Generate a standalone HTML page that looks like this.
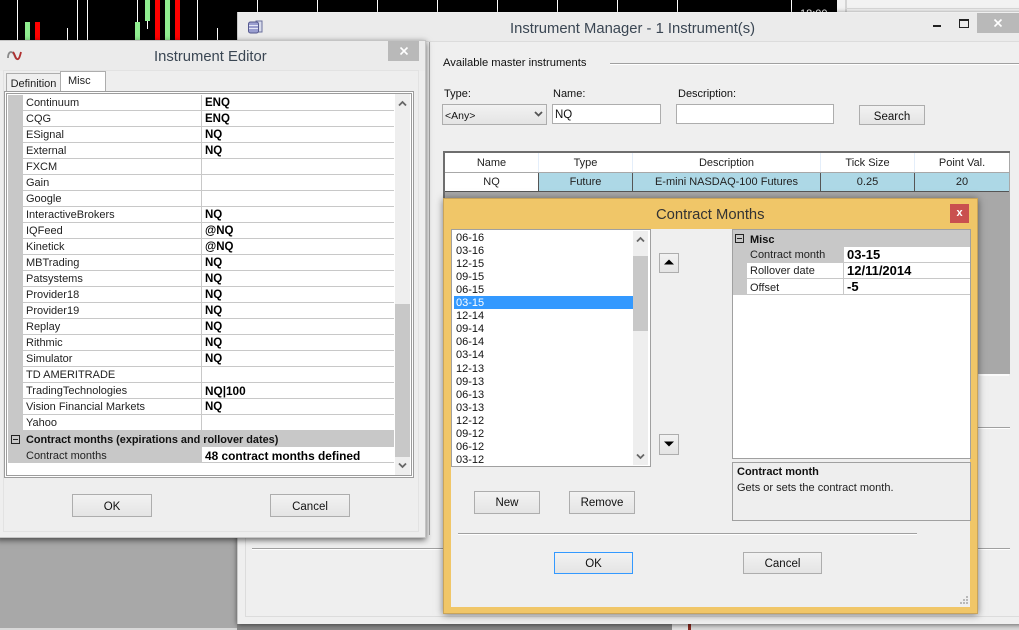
<!DOCTYPE html>
<html><head><meta charset="utf-8">
<style>
html,body{margin:0;padding:0;background:#a8a8a8}
#p{position:relative;width:1019px;height:630px;overflow:hidden;background:#a8a8a8;font-family:"Liberation Sans",sans-serif;font-size:11px;color:#111}
#p div{position:absolute;box-sizing:border-box}
.t{white-space:nowrap;line-height:14px;height:14px;padding-top:1px}
.b{font-weight:bold;font-size:11.9px;color:#000}
.pv{font-weight:bold;font-size:13px;color:#000}
.btn{background:linear-gradient(#f2f2f2,#e4e4e4);border:1px solid #adadad;text-align:center;font-size:11.5px;color:#111;padding-top:2px}
.r{left:23px;width:371px;height:16px;background:#fff;border-bottom:1px solid #c8c8c8}
.r i{position:absolute;left:178px;top:0;width:1px;height:16px;background:#c8c8c8}
.r span{position:absolute;top:1px;left:3px;line-height:15px;white-space:nowrap;color:#222}
.r b{position:absolute;top:1px;left:182px;line-height:15px;font-size:11.5px;color:#000;white-space:nowrap}
.li{left:2px;width:179px;height:13px;line-height:15px;padding-left:2px;color:#111;font-size:11px}
.h{top:153px;height:19px;line-height:21px;text-align:center;background:#fff;border-right:1px solid #e4eefa;color:#222}
.c{top:173px;height:18px;line-height:19px;text-align:center;background:#add8e6;border-right:1px solid #555;color:#222}
.in{background:#fff;border:1px solid #adadad}
.sep{height:2px;background:linear-gradient(#a0a0a0 50%,#fff 50%)}
</style></head><body>
<div id="p">
<!-- chart behind -->
<div style="left:0;top:0;width:837px;height:40px;background:#000"></div>
<div style="left:800px;top:9px;width:30px;height:4px;overflow:hidden;color:#fff;font-size:11px;line-height:11px">18:00</div>
<div style="left:837px;top:0;width:182px;height:13px;background:#f2f2f2"></div>
<div style="left:845px;top:0;width:2px;height:13px;background:#d4d4d4"></div>
<div style="left:845px;top:8px;width:174px;height:1px;background:#d8d8d8"></div>
<div style="left:17px;top:0;width:1px;height:40px;background:#fff"></div>
<div style="left:67px;top:28px;width:1px;height:12px;background:#fff"></div>
<div style="left:77px;top:0;width:1px;height:40px;background:#fff"></div>
<div style="left:87px;top:0;width:1px;height:40px;background:#fff"></div>
<div style="left:137px;top:0;width:1px;height:22px;background:#fff"></div>
<div style="left:147px;top:20px;width:1px;height:9px;background:#fff"></div>
<div style="left:197px;top:0;width:1px;height:40px;background:#fff"></div>
<div style="left:217px;top:28px;width:1px;height:12px;background:#fff"></div>
<div style="left:257px;top:0;width:1px;height:13px;background:#fff"></div>
<div style="left:317px;top:0;width:1px;height:13px;background:#fff"></div>
<div style="left:377px;top:0;width:1px;height:13px;background:#fff"></div>
<div style="left:437px;top:0;width:1px;height:13px;background:#fff"></div>
<div style="left:497px;top:0;width:1px;height:13px;background:#fff"></div>
<div style="left:557px;top:0;width:1px;height:13px;background:#fff"></div>
<div style="left:617px;top:0;width:1px;height:13px;background:#fff"></div>
<div style="left:677px;top:0;width:1px;height:13px;background:#fff"></div>
<div style="left:791px;top:0;width:1px;height:13px;background:#fff"></div>
<div style="left:25px;top:22px;width:5px;height:18px;background:#90ee90"></div>
<div style="left:35px;top:22px;width:5px;height:18px;background:#f00"></div>
<div style="left:135px;top:22px;width:5px;height:18px;background:#90ee90"></div>
<div style="left:145px;top:0;width:5px;height:21px;background:#90ee90"></div>
<div style="left:155px;top:0;width:5px;height:40px;background:#f00"></div>
<div style="left:165px;top:0;width:5px;height:40px;background:#90ee90"></div>
<div style="left:175px;top:0;width:5px;height:40px;background:#f00"></div>
<!-- bottom strip -->
<div style="left:0;top:628px;width:1019px;height:2px;background:#d8d8d8"></div>
<div style="left:237px;top:624px;width:782px;height:6px;background:#dcdcdc"></div>
<div style="left:237px;top:624px;width:435px;height:6px;background:#8a8a8a"></div>
<div style="left:672px;top:624px;width:16px;height:6px;background:#e6e6e6"></div>
<div style="left:688px;top:624px;width:3px;height:6px;background:#8a2a20"></div>

<!-- Manager window -->
<div style="left:237px;top:12px;width:790px;height:612px;background:#efefef;box-shadow:0 1px 5px rgba(0,0,0,.55);border-left:1px solid #c8c8c8"></div>
<div style="left:238px;top:13px;width:781px;height:29px;background:#ebebeb;border-bottom:1px solid #dcdcdc"></div>
<div style="left:245px;top:42px;width:790px;height:575px;border-left:1px solid #dcdcdc;border-bottom:1px solid #dcdcdc"></div>
<svg style="position:absolute;left:247px;top:19px" width="16" height="16" viewBox="0 0 16 16"><rect x="9" y="2" width="6" height="11" fill="#d9dcec" stroke="#6a6f9c"/><rect x="1.500" y="3" width="10" height="11" rx="2" fill="#9a9ed0" stroke="#55598f"/><path d="M2 6.500h9M2 9.500h9" stroke="#e4e6f6"/></svg>
<div class="t" id="mt" style="left:510px;top:19px;height:19px;line-height:18px;font-size:14.8px;color:#3a4653">Instrument Manager - 1 Instrument(s)</div>
<div style="left:933px;top:25px;width:8px;height:2px;background:#222"></div>
<div style="left:959px;top:19px;width:10px;height:9px;border:1px solid #222;border-top-width:2px"></div>
<div style="left:977px;top:13px;width:42px;height:20px;background:#b9b9b9"></div>
<svg style="position:absolute;left:993px;top:18px" width="10" height="10"><path d="M1.500 1.500l7 7M8.500 1.500l-7 7" stroke="#fff" stroke-width="1.600"/></svg>
<div class="t" style="left:443px;top:55px;font-size:11.200px">Available master instruments</div>
<div class="sep" style="left:610px;top:63px;width:409px"></div>
<div class="t" style="left:444px;top:86px">Type:</div>
<div class="t" style="left:553px;top:86px">Name:</div>
<div class="t" style="left:678px;top:86px">Description:</div>
<div class="btn" style="left:442px;top:104px;width:105px;height:21px;text-align:left;padding-left:2px;line-height:20px;font-size:10.500px;padding-top:1px">&lt;Any&gt;</div>
<svg style="position:absolute;left:534px;top:111px" width="9" height="7"><path d="M1 1l3.500 3.500L8 1" fill="none" stroke="#555" stroke-width="1.800"/></svg>
<div class="in t" style="left:552px;top:104px;width:109px;height:20px;line-height:18px;padding-left:2px;font-size:11.500px">NQ</div>
<div class="in" style="left:676px;top:104px;width:158px;height:20px"></div>
<div class="btn" style="left:859px;top:105px;width:66px;height:20px;line-height:18px">Search</div>
<!-- table -->
<div style="left:443px;top:151px;width:567px;height:223px;background:#a8a8a8;border:2px solid #6e6e6e;border-bottom:0;border-right:0"></div>
<div class="h" style="left:445px;width:94px">Name</div>
<div class="h" style="left:539px;width:94px">Type</div>
<div class="h" style="left:633px;width:188px">Description</div>
<div class="h" style="left:821px;width:94px">Tick Size</div>
<div class="h" style="left:915px;width:94px;border:0">Point Val.</div>
<div class="c" style="left:445px;width:94px;background:#fff">NQ</div>
<div class="c" style="left:539px;width:94px">Future</div>
<div class="c" style="left:633px;width:188px">E-mini NASDAQ-100 Futures</div>
<div class="c" style="left:821px;width:94px">0.25</div>
<div class="c" style="left:915px;width:94px;border:0">20</div>
<div style="left:445px;top:191px;width:564px;height:1px;background:#555"></div>
<div style="left:979px;top:374px;width:30px;height:2px;background:#fafafa"></div>
<div class="sep" style="left:978px;top:427px;width:32px"></div>
<div class="sep" style="left:978px;top:548px;width:32px"></div>
<div class="sep" style="left:252px;top:548px;width:191px"></div>
<div style="left:429px;top:42px;width:1px;height:493px;background:#a8a8a8"></div>

<!-- Instrument Editor -->
<div style="left:-4px;top:40px;width:430px;height:498px;background:#eeeeee;border:1px solid #c4c4c4;box-shadow:0 2px 6px rgba(0,0,0,.6)"></div>
<div style="left:0;top:41px;width:425px;height:30px;background:#ebebeb"></div>
<svg style="position:absolute;left:6px;top:48px" width="17" height="14" viewBox="0 0 17 14"><path d="M2 10C2 4 5 3 7 5s2 6 4 6" fill="none" stroke="#8a8a8a" stroke-width="1.800"/><path d="M7 4c2 2 2 6 4 7s3-3 4-7" fill="none" stroke="#b03030" stroke-width="1.800"/></svg>
<div class="t" id="et" style="left:154px;top:47px;height:19px;line-height:18px;font-size:14.8px;color:#3a4653">Instrument Editor</div>
<div style="left:388px;top:41px;width:31px;height:20px;background:#b9b9b9"></div>
<svg style="position:absolute;left:399px;top:46px" width="10" height="10"><path d="M1.500 1.500l7 7M8.500 1.500l-7 7" stroke="#fff" stroke-width="1.600"/></svg>
<div style="left:3px;top:70px;width:416px;height:462px;border:1px solid #e2e2e2"></div>
<div style="left:6px;top:73px;width:55px;height:19px;background:#efefef;border:1px solid #adadad;line-height:20px;text-align:center;color:#222">Definition</div>
<div style="left:60px;top:71px;width:46px;height:21px;background:#fff;border:1px solid #adadad;border-bottom:0;line-height:19px;padding-left:7px;color:#222">Misc</div>
<div style="left:4px;top:91px;width:410px;height:387px;background:#fff;border:1px solid #9c9c9c"></div>
<div style="left:6px;top:93px;width:406px;height:383px;background:#fff;border:1px solid #9c9c9c"></div>
<div style="left:8px;top:95px;width:15px;height:336px;background:#c8c8c8"></div>
<div class="r" style="top:95px"><span>Continuum</span><i></i><b>ENQ</b></div>
<div class="r" style="top:111px"><span>CQG</span><i></i><b>ENQ</b></div>
<div class="r" style="top:127px"><span>ESignal</span><i></i><b>NQ</b></div>
<div class="r" style="top:143px"><span>External</span><i></i><b>NQ</b></div>
<div class="r" style="top:159px"><span>FXCM</span><i></i></div>
<div class="r" style="top:175px"><span>Gain</span><i></i></div>
<div class="r" style="top:191px"><span>Google</span><i></i></div>
<div class="r" style="top:207px"><span>InteractiveBrokers</span><i></i><b>NQ</b></div>
<div class="r" style="top:223px"><span>IQFeed</span><i></i><b>@NQ</b></div>
<div class="r" style="top:239px"><span>Kinetick</span><i></i><b>@NQ</b></div>
<div class="r" style="top:255px"><span>MBTrading</span><i></i><b>NQ</b></div>
<div class="r" style="top:271px"><span>Patsystems</span><i></i><b>NQ</b></div>
<div class="r" style="top:287px"><span>Provider18</span><i></i><b>NQ</b></div>
<div class="r" style="top:303px"><span>Provider19</span><i></i><b>NQ</b></div>
<div class="r" style="top:319px"><span>Replay</span><i></i><b>NQ</b></div>
<div class="r" style="top:335px"><span>Rithmic</span><i></i><b>NQ</b></div>
<div class="r" style="top:351px"><span>Simulator</span><i></i><b>NQ</b></div>
<div class="r" style="top:367px"><span>TD AMERITRADE</span><i></i></div>
<div class="r" style="top:383px"><span>TradingTechnologies</span><i></i><b style="font-size:11.800px">NQ|100</b></div>
<div class="r" style="top:399px"><span>Vision Financial Markets</span><i></i><b>NQ</b></div>
<div class="r" style="top:415px"><span>Yahoo</span><i></i></div>
<div style="left:8px;top:431px;width:386px;height:16px;background:#c8c8c8"></div>
<div style="left:11px;top:435px;width:9px;height:9px;border:1px solid #222"></div>
<div style="left:13px;top:439px;width:5px;height:1px;background:#222"></div>
<div class="t" style="left:26px;top:432px;height:15px;font-weight:bold;font-size:10.900px;color:#111">Contract months (expirations and rollover dates)</div>
<div style="left:8px;top:447px;width:194px;height:16px;background:#c8c8c8"></div>
<div class="t" style="left:26px;top:448px;height:15px;color:#222">Contract months</div>
<div class="t b" style="left:205px;top:448px;height:15px">48 contract months defined</div>
<div style="left:202px;top:462px;width:192px;height:1px;background:#c8c8c8"></div>
<div style="left:395px;top:94px;width:15px;height:381px;background:#eee"></div>
<div style="left:395px;top:304px;width:15px;height:153px;background:#c8c8c8"></div>
<svg style="position:absolute;left:398px;top:100px" width="9" height="7"><path d="M1 5.500l3.500-3.500L8 5.500" fill="none" stroke="#666" stroke-width="1.800"/></svg>
<svg style="position:absolute;left:398px;top:462px" width="9" height="7"><path d="M1 1.500l3.500 3.500L8 1.500" fill="none" stroke="#666" stroke-width="1.800"/></svg>
<div class="btn" style="left:72px;top:494px;width:80px;height:23px;line-height:20px">OK</div>
<div class="btn" style="left:270px;top:494px;width:80px;height:23px;line-height:20px">Cancel</div>

<!-- Contract Months -->
<div style="left:443px;top:198px;width:535px;height:416px;background:#f0c668;border:1px solid #c9a45a;box-shadow:0 1px 7px rgba(0,0,0,.5)"></div>
<div class="t" id="ct" style="left:656px;top:205px;height:19px;line-height:18px;font-size:14.8px;color:#333">Contract Months</div>
<div style="left:950px;top:204px;width:19px;height:19px;background:#c9504f;color:#fff;text-align:center;font-weight:bold;font-size:11px;line-height:18px">x</div>
<div style="left:451px;top:229px;width:519px;height:378px;background:#efefef"></div>
<!-- listbox -->
<div style="left:451px;top:229px;width:200px;height:238px;background:#fff;border:1px solid #a0a0a0">
<div class="li" style="top:1px">06-16</div>
<div class="li" style="top:14px">03-16</div>
<div class="li" style="top:27px">12-15</div>
<div class="li" style="top:40px">09-15</div>
<div class="li" style="top:53px">06-15</div>
<div class="li" style="top:66px;background:#3399ff;color:#fff">03-15</div>
<div class="li" style="top:79px">12-14</div>
<div class="li" style="top:92px">09-14</div>
<div class="li" style="top:105px">06-14</div>
<div class="li" style="top:118px">03-14</div>
<div class="li" style="top:132px">12-13</div>
<div class="li" style="top:145px">09-13</div>
<div class="li" style="top:158px">06-13</div>
<div class="li" style="top:171px">03-13</div>
<div class="li" style="top:184px">12-12</div>
<div class="li" style="top:197px">09-12</div>
<div class="li" style="top:210px">06-12</div>
<div class="li" style="top:222px;height:14px;line-height:17px">03-12</div>
</div>
<div style="left:633px;top:231px;width:15px;height:234px;background:#eee"></div>
<div style="left:633px;top:256px;width:15px;height:75px;background:#c8c8c8"></div>
<svg style="position:absolute;left:636px;top:236px" width="9" height="7"><path d="M1 5.500l3.500-3.500L8 5.500" fill="none" stroke="#666" stroke-width="1.800"/></svg>
<svg style="position:absolute;left:636px;top:453px" width="9" height="7"><path d="M1 1.500l3.500 3.500L8 1.500" fill="none" stroke="#666" stroke-width="1.800"/></svg>
<div class="btn" style="left:659px;top:253px;width:20px;height:20px;padding:0"></div>
<svg style="position:absolute;left:664px;top:259px" width="10" height="6"><path d="M0 5.500L5 .5l5 5z" fill="#000"/></svg>
<div class="btn" style="left:659px;top:434px;width:20px;height:21px;padding:0"></div>
<svg style="position:absolute;left:664px;top:441px" width="10" height="6"><path d="M0 .5L5 5.500 10 .5z" fill="#000"/></svg>
<!-- property grid -->
<div style="left:732px;top:229px;width:239px;height:230px;background:#fff;border:1px solid #a0a0a0"></div>
<div style="left:733px;top:230px;width:237px;height:17px;background:#c8c8c8"></div>
<div style="left:735px;top:234px;width:9px;height:9px;border:1px solid #222"></div>
<div style="left:737px;top:238px;width:5px;height:1px;background:#222"></div>
<div class="t" style="left:750px;top:232px;height:15px;font-weight:bold;color:#111">Misc</div>
<div style="left:733px;top:247px;width:111px;height:16px;background:#c8c8c8"></div>
<div style="left:733px;top:263px;width:14px;height:32px;background:#c8c8c8"></div>
<div style="left:747px;top:262px;width:223px;height:1px;background:#c8c8c8"></div>
<div style="left:747px;top:278px;width:223px;height:1px;background:#c8c8c8"></div>
<div style="left:733px;top:294px;width:237px;height:1px;background:#c8c8c8"></div>
<div style="left:843px;top:263px;width:1px;height:32px;background:#c8c8c8"></div>
<div class="t" style="left:750px;top:247px;height:15px;color:#222">Contract month</div>
<div class="t" style="left:750px;top:263px;height:15px;color:#222">Rollover date</div>
<div class="t" style="left:750px;top:280px;height:14px;color:#222">Offset</div>
<div class="t pv" style="left:847px;top:247px;height:15px">03-15</div>
<div class="t pv" style="left:847px;top:263px;height:15px">12/11/2014</div>
<div class="t pv" style="left:847px;top:279px;height:15px">-5</div>
<!-- help -->
<div style="left:732px;top:462px;width:239px;height:59px;background:#eee;border:1px solid #a0a0a0"></div>
<div class="t" style="left:737px;top:464px;height:15px;font-weight:bold;color:#111">Contract month</div>
<div class="t" style="left:737px;top:480px;height:15px;color:#222">Gets or sets the contract month.</div>
<div class="btn" style="left:474px;top:491px;width:66px;height:23px;line-height:19px">New</div>
<div class="btn" style="left:569px;top:491px;width:66px;height:23px;line-height:19px">Remove</div>
<div class="sep" style="left:458px;top:533px;width:459px"></div>
<div class="btn" style="left:554px;top:552px;width:79px;height:22px;line-height:19px;border-color:#3399ff">OK</div>
<div class="btn" style="left:743px;top:552px;width:79px;height:22px;line-height:19px">Cancel</div>
<svg style="position:absolute;left:960px;top:596px" width="9" height="9" fill="#b8b8b8"><rect x="6" y="0" width="2" height="2"/><rect x="3" y="3" width="2" height="2"/><rect x="6" y="3" width="2" height="2"/><rect x="0" y="6" width="2" height="2"/><rect x="3" y="6" width="2" height="2"/><rect x="6" y="6" width="2" height="2"/></svg>
</div>
</body></html>
